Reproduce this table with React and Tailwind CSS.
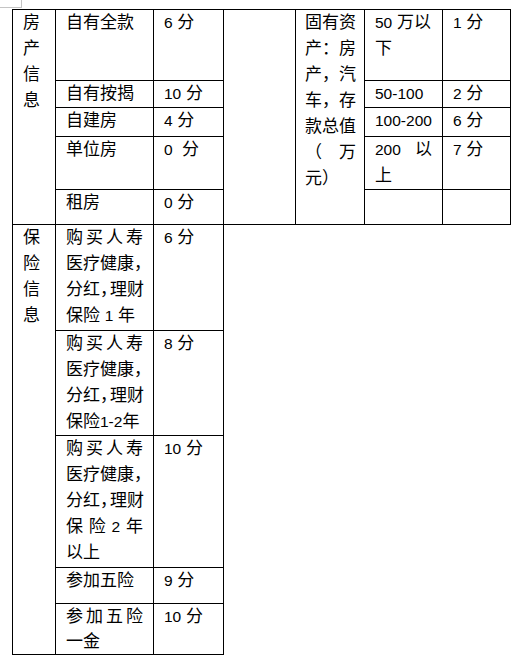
import React from "react";

const FONT = "font-['Liberation_Sans','Noto_Sans_CJK_SC',sans-serif]";
const CELL = "border border-black align-top pl-[10px] pr-[10px] py-0";

function L({ children, j, h }) {
  const size = h === 25 ? "h-[25px] leading-[25px]" : "h-[26px] leading-[26px]";
  return (
    <div className={`${size} whitespace-pre ${j ? "flex justify-between" : ""}`}>
      {children}
    </div>
  );
}

function N({ children }) {
  return <span className="text-[15.5px]">{children}</span>;
}

function Chars({ text }) {
  return text.split(" ").map((c, i) => <span key={i}>{c}</span>);
}

// narrow full-width comma, as Word squeezes it
const C = () => <span className="tracking-[-7px]">，</span>;

export default function App() {
  return (
    <div className={`min-h-screen bg-white text-black text-[17px] ${FONT}`}>
      <div className="w-[22px] h-[8px] border-r border-b border-[#c4c4c4]" />
      <table className="ml-[12px] mt-[1px] w-[499px] table-fixed border-collapse">
        <colgroup>
          <col className="w-[43px]" />
          <col className="w-[98px]" />
          <col className="w-[70px]" />
          <col className="w-[72px]" />
          <col className="w-[69px]" />
          <col className="w-[78px]" />
          <col className="w-[68px]" />
        </colgroup>
        <tbody>
          <tr className="h-[71px]">
            <td rowSpan={5} className={CELL}>
              <L>房</L>
              <L>产</L>
              <L>信</L>
              <L>息</L>
            </td>
            <td className={CELL}><L>自有全款</L></td>
            <td className={CELL}><L><N>6</N> 分</L></td>
            <td rowSpan={5} className={CELL} />
            <td rowSpan={5} className="border border-black align-top pl-[9px] pr-[8px] py-0">
              <L>固有资</L>
              <L>产：房</L>
              <L>产，汽</L>
              <L>车，存</L>
              <L>款总值</L>
              <L j><span>（</span><span>万</span></L>
              <L>元）</L>
            </td>
            <td className={CELL}>
              <L><N>50</N> 万以</L>
              <L>下</L>
            </td>
            <td className={CELL}><L><N>1</N> 分</L></td>
          </tr>
          <tr className="h-[27px]">
            <td className={CELL}><L>自有按揭</L></td>
            <td className={CELL}><L><N>10</N> 分</L></td>
            <td className={CELL}><L><N>50-100</N></L></td>
            <td className={CELL}><L><N>2</N> 分</L></td>
          </tr>
          <tr className="h-[29px]">
            <td className={CELL}><L>自建房</L></td>
            <td className={CELL}><L><N>4</N> 分</L></td>
            <td className={CELL}><L><N>100-200</N></L></td>
            <td className={CELL}><L><N>6</N> 分</L></td>
          </tr>
          <tr className="h-[53px]">
            <td className={CELL}><L>单位房</L></td>
            <td className={CELL}><L><N>0</N>{"  "}分</L></td>
            <td className={CELL}>
              <L j><N>200</N><span>以</span></L>
              <L>上</L>
            </td>
            <td className={CELL}><L><N>7</N> 分</L></td>
          </tr>
          <tr className="h-[35px]">
            <td className={CELL}><L>租房</L></td>
            <td className={CELL}><L><N>0</N> 分</L></td>
            <td className={CELL} />
            <td className={CELL} />
          </tr>

          <tr className="h-[106px]">
            <td rowSpan={5} className={CELL}>
              <L>保</L>
              <L>险</L>
              <L>信</L>
              <L>息</L>
            </td>
            <td className={CELL}>
              <L j><Chars text="购 买 人 寿" /></L>
              <L>医疗健康，</L>
              <L>分红<C />理财</L>
              <L>保险 <N>1</N> 年</L>
            </td>
            <td className={CELL}><L><N>6</N> 分</L></td>
          </tr>
          <tr className="h-[104px]">
            <td className={CELL}>
              <L j><Chars text="购 买 人 寿" /></L>
              <L>医疗健康，</L>
              <L>分红<C />理财</L>
              <L>保险<N>1-2</N>年</L>
            </td>
            <td className={CELL}><L><N>8</N> 分</L></td>
          </tr>
          <tr className="h-[132px]">
            <td className={CELL}>
              <L j><Chars text="购 买 人 寿" /></L>
              <L>医疗健康，</L>
              <L>分红<C />理财</L>
              <L j><span>保</span><span>险</span><N>2</N><span>年</span></L>
              <L>以上</L>
            </td>
            <td className={CELL}><L><N>10</N> 分</L></td>
          </tr>
          <tr className="h-[36px]">
            <td className={CELL}><L>参加五险</L></td>
            <td className={CELL}><L><N>9</N> 分</L></td>
          </tr>
          <tr className="h-[50px]">
            <td className={CELL}>
              <L j h={25}><Chars text="参 加 五 险" /></L>
              <L h={25}>一金</L>
            </td>
            <td className={CELL}><L h={25}><N>10</N> 分</L></td>
          </tr>
        </tbody>
      </table>
    </div>
  );
}
